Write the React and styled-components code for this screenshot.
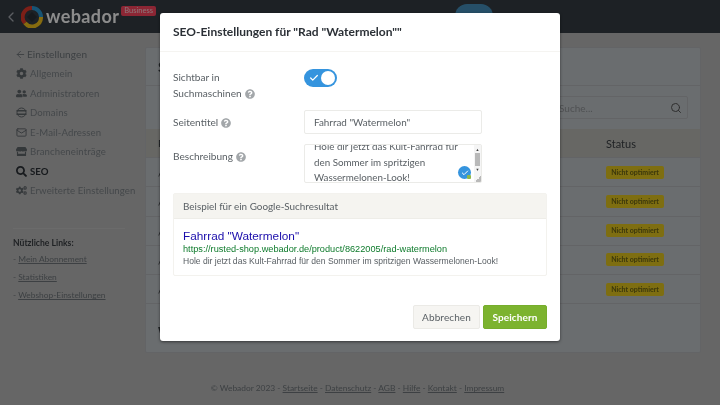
import React from "react";
import styled, { createGlobalStyle } from "styled-components";
import {
  FaCog,
  FaCogs,
  FaQuestionCircle,
  FaSearch,
  FaStore,
  FaUserFriends,
} from "react-icons/fa";
import { ArrowLeft, Check, ChevronLeft, Mail, Search } from "lucide-react";

const GlobalStyle = createGlobalStyle`
  html, body {
    margin: 0;
    padding: 0;
    width: 720px;
    height: 405px;
    overflow: hidden;
    background: #bababa;
    font-family: Lato, "Open Sans", sans-serif;
  }
  * { box-sizing: border-box; }
`;

const Page = styled.div`
  position: relative;
  width: 720px;
  height: 405px;
  display: flex;
  flex-direction: column;
  background: #bababa;
  filter: blur(0.35px);
`;

const TopBar = styled.header`
  height: 33px;
  background: #353c44;
  display: flex;
  align-items: center;
  padding-left: 3px;
  position: relative;
`;

const Back = styled(ChevronLeft)`
  color: #a8adb2;
  margin-right: 2px;
`;

const Brand = styled.span`
  font-size: 18px;
  font-weight: 700;
  letter-spacing: 0.4px;
  color: #fff;
  margin-left: 3px;
  margin-top: -1px;
`;

const PlanBadge = styled.span`
  align-self: flex-start;
  margin: 6px 0 0 2px;
  height: 10px;
  padding: 0 3px;
  background: #ff4560;
  border-radius: 2px;
  color: #ffd6da;
  font-size: 7.5px;
  line-height: 10px;
`;

const PublishButton = styled.span`
  position: absolute;
  left: 455px;
  top: 4px;
  width: 38px;
  height: 24px;
  border-radius: 12px;
  background: #4591bd;
`;

const Body = styled.div`
  display: flex;
  height: 372px;
`;

const Sidebar = styled.nav`
  width: 145px;
  padding: 14px 0 0 13px;
  flex-shrink: 0;
`;

const BackLink = styled.div`
  display: flex;
  align-items: center;
  gap: 1px;
  height: 14px;
  margin: 0 0 3px 2px;
  font-size: 10px;
  letter-spacing: 0.1px;
  color: #6f757a;
`;

const NavItem = styled.div`
  display: flex;
  align-items: center;
  height: 19.5px;
  font-size: 9.6px;
  letter-spacing: 0.1px;
  white-space: nowrap;
  color: ${(p) => (p.$active ? "#2b3036" : "#7d8388")};
  font-weight: ${(p) => (p.$active ? 700 : 400)};
  svg {
    width: 11px;
    height: 11px;
    flex-shrink: 0;
    margin: 0 3px 0 3px;
    color: ${(p) => (p.$active ? "#2b3036" : "#60666b")};
  }
`;

const Rule = styled.div`
  width: 112px;
  height: 1px;
  background: #c4c4c4;
  margin: 27px 0 9px;
`;

const LinksTitle = styled.div`
  font-size: 8.6px;
  line-height: 10px;
  font-weight: 700;
  color: #3a3e43;
  margin-bottom: 5px;
`;

const UsefulLink = styled.div`
  font-size: 8.4px;
  color: #6f757a;
  height: 18.4px;
  line-height: 12px;
  span {
    text-decoration: underline;
  }
`;

const Card = styled.main`
  width: 556px;
  height: 306px;
  margin-top: 14px;
  background: #c2c6cb;
  border: 1px solid #b4b7ba;
  border-radius: 2px;
  display: flex;
  flex-direction: column;
`;

const CardTitle = styled.div`
  height: 38px;
  padding: 10px 12px;
  font-size: 14px;
  font-weight: 700;
  color: #3a3e43;
  border-bottom: 1px solid #b4b7ba;
`;

const SearchRow = styled.div`
  height: 43px;
  display: flex;
  justify-content: flex-end;
  align-items: center;
  padding-right: 12px;
`;

const SearchBox = styled.div`
  width: 300px;
  height: 23px;
  border: 1px solid #b4b7ba;
  border-radius: 2px;
  display: flex;
  align-items: center;
  justify-content: space-between;
  padding: 0 5px 0 170px;
  font-size: 10px;
  color: #8f9396;
`;

const Row = styled.div`
  display: flex;
  justify-content: space-between;
  align-items: center;
  height: 29.2px;
  padding: 0 36px 0 12px;
  font-size: 10px;
  color: #3a3e43;
  border-bottom: 1px solid #b4b7ba;
  background: ${(p) => (p.$head ? "#bcbcb6" : "transparent")};
`;

const StatusHead = styled.span`
  width: 58px;
  font-size: 11px;
  margin-left: -1px;
`;

const StatusBadge = styled.span`
  width: 58px;
  height: 13px;
  border-radius: 2px;
  background: #e6c91f;
  color: #6b6415;
  font-size: 7px;
  line-height: 13px;
  font-weight: 700;
  text-align: center;
  white-space: nowrap;
`;

const SubTitle = styled.div`
  margin: 20px 0 0 12px;
  font-size: 13px;
  font-weight: 700;
  color: #3a3e43;
`;

const Footer = styled.footer`
  position: absolute;
  top: 383px;
  left: 0;
  width: 720px;
  padding-right: 5px;
  text-align: center;
  font-size: 8.4px;
  color: #6f757a;
  span {
    text-decoration: underline;
  }
`;

const Overlay = styled.div`
  position: absolute;
  inset: 0;
  background: rgba(0, 0, 0, 0.45);
`;

const Modal = styled.section`
  position: absolute;
  left: 160px;
  top: 13px;
  width: 400px;
  height: 328px;
  background: #fff;
  border-radius: 3px;
  box-shadow: 0 1px 3px rgba(0, 0, 0, 0.5);
  color: #5a6065;
`;

const ModalHead = styled.h2`
  margin: 0;
  height: 39px;
  padding: 0 13px;
  font-size: 12px;
  line-height: 38px;
  font-weight: 700;
  color: #2b3036;
  border-bottom: 1px solid #f5f4f1;
`;

const ModalBody = styled.div`
  padding: 17px 13px 0;
`;

const Field = styled.div`
  display: grid;
  grid-template-columns: 131px 178px;
  font-size: 10.1px;
  line-height: 16px;
  margin-bottom: ${(p) => p.$gap}px;
`;

const FieldLabel = styled.label`
  display: block;
  padding-top: ${(p) => p.$top || 0}px;
`;

const Help = styled(FaQuestionCircle)`
  color: #a3a7aa;
  width: 10px;
  height: 10px;
  margin-left: 3px;
  vertical-align: -2px;
`;

const Toggle = styled.span`
  width: 33px;
  height: 18px;
  border-radius: 9px;
  background: #3594de;
  display: flex;
  align-items: center;
  justify-content: space-between;
  padding: 0 2px 0 5px;
  color: #fff;
`;

const Knob = styled.span`
  width: 14px;
  height: 14px;
  border-radius: 50%;
  background: #fff;
`;

const TextInput = styled.div`
  height: 24px;
  padding: 0 9px;
  font-size: 9.9px;
  line-height: 23px;
  border: 1px solid #ebebe8;
  border-radius: 2px;
`;

const TextArea = styled.div`
  position: relative;
  height: 39px;
  overflow: hidden;
  border: 1px solid #ebebe8;
  border-radius: 2px;
  display: flex;
`;

const AreaText = styled.div`
  flex: 1;
  padding: 0 6px 0 9px;
  margin-top: -6px;
  font-size: 9.8px;
  line-height: 15.7px;
`;

const Scrollbar = styled.div`
  width: 7px;
  background: #f5f5f5;
  position: relative;
  display: flex;
  flex-direction: column;
  align-items: center;
  justify-content: space-between;
  padding: 3px 0 10px;
  font-size: 4px;
  line-height: 4px;
  color: #444;
  &::after {
    content: "";
    position: absolute;
    right: 0;
    bottom: 0;
    width: 6px;
    height: 6px;
    background: linear-gradient(135deg, transparent 50%, #b9b9b9 50%);
  }
`;

const Thumb = styled.span`
  position: absolute;
  top: 8px;
  left: 1px;
  width: 5px;
  height: 13px;
  background: #b9b9b9;
`;

const Checker = styled.span`
  position: absolute;
  right: 10px;
  bottom: 3px;
  width: 13px;
  height: 13px;
  border-radius: 50%;
  background: #3594de;
  color: #fff;
  display: flex;
  align-items: center;
  justify-content: center;
  &::after {
    content: "";
    position: absolute;
    right: 0;
    bottom: 0;
    width: 4px;
    height: 4px;
    background: #8fb84a;
    border-radius: 1px;
  }
`;

const Preview = styled.div`
  margin-top: 10px;
  height: 83px;
  border: 1px solid #f3f2ee;
  border-radius: 2px;
`;

const PreviewHead = styled.div`
  height: 25px;
  padding: 0 9px;
  font-size: 9.9px;
  line-height: 24px;
  background: #f5f4f0;
  border-bottom: 1px solid #eeede8;
`;

const PreviewBody = styled.div`
  padding: 10px 9px;
  font-family: "Liberation Sans", Arial, sans-serif;
`;

const ResultTitle = styled.div`
  font-size: 11.8px;
  line-height: 14px;
  color: #1a0dab;
`;

const ResultUrl = styled.div`
  font-size: 9.2px;
  line-height: 12px;
  color: #0d7a2b;
`;

const ResultText = styled.div`
  font-size: 8.55px;
  line-height: 13px;
  color: #5a6065;
`;

const Actions = styled.div`
  display: flex;
  justify-content: flex-end;
  gap: 3px;
  margin-top: 29px;
`;

const Button = styled.button`
  height: 24px;
  width: ${(p) => (p.$primary ? 64 : 67)}px;
  padding: 0;
  border-radius: 2px;
  border: 1px solid ${(p) => (p.$primary ? "#76ad2c" : "#ebeae6")};
  background: ${(p) => (p.$primary ? "#7cb32f" : "#f6f5f2")};
  color: ${(p) => (p.$primary ? "#fff" : "#5a6065")};
  font-family: inherit;
  font-size: 10px;
  letter-spacing: 0.1px;
  font-weight: ${(p) => (p.$primary ? 700 : 400)};
`;

const Logo = () => (
  <svg width="22" height="22" viewBox="0 0 22 22">
    <path d="M11 2 A9 9 0 0 0 4 17" fill="none" stroke="#e4392b" strokeWidth="4" />
    <path d="M11 2 A9 9 0 0 1 20 11" fill="none" stroke="#2a9ad6" strokeWidth="4" />
    <path d="M20 11 A9 9 0 0 1 4 17" fill="none" stroke="#f5c31c" strokeWidth="4" />
    <path d="M11 6 L16 11 L11 16 L6 11 Z" fill="#2b3036" />
  </svg>
);

const DomainIcon = () => (
  <svg width="11" height="11" viewBox="0 0 11 11" fill="none" stroke="currentColor">
    <circle cx="5.5" cy="5.5" r="4.5" />
    <path d="M0.5 3.8h10M0.5 7.2h10" strokeWidth="1.4" />
  </svg>
);

const rows = [0, 1, 2, 3, 4];

const App = () => (
  <Page>
    <GlobalStyle />
    <TopBar>
      <Back size={16} />
      <Logo />
      <Brand>webador</Brand>
      <PlanBadge>Business</PlanBadge>
      <PublishButton />
    </TopBar>
    <Body>
      <Sidebar>
        <BackLink>
          <ArrowLeft size={11} />
          Einstellungen
        </BackLink>
        <NavItem>
          <FaCog />
          Allgemein
        </NavItem>
        <NavItem>
          <FaUserFriends />
          Administratoren
        </NavItem>
        <NavItem>
          <DomainIcon />
          Domains
        </NavItem>
        <NavItem>
          <Mail size={11} />
          E-Mail-Adressen
        </NavItem>
        <NavItem>
          <FaStore />
          Brancheneinträge
        </NavItem>
        <NavItem $active>
          <FaSearch />
          SEO
        </NavItem>
        <NavItem>
          <FaCogs />
          Erweiterte Einstellungen
        </NavItem>
        <Rule />
        <LinksTitle>Nützliche Links:</LinksTitle>
        <UsefulLink>
          - <span>Mein Abonnement</span>
        </UsefulLink>
        <UsefulLink>
          - <span>Statistiken</span>
        </UsefulLink>
        <UsefulLink>
          - <span>Webshop-Einstellungen</span>
        </UsefulLink>
      </Sidebar>
      <Card>
        <CardTitle>SEO</CardTitle>
        <SearchRow>
          <SearchBox>
            Suche...
            <Search size={12} color="#555" />
          </SearchBox>
        </SearchRow>
        <Row $head>
          <span>Produkt</span>
          <StatusHead>Status</StatusHead>
        </Row>
        {rows.map((r) => (
          <Row key={r}>
            <span>/</span>
            <StatusBadge>Nicht optimiert</StatusBadge>
          </Row>
        ))}
        <SubTitle>Webshop</SubTitle>
      </Card>
    </Body>
    <Footer>
      © Webador 2023 - <span>Startseite</span> - <span>Datenschutz</span> -{" "}
      <span>AGB</span> - <span>Hilfe</span> - <span>Kontakt</span> -{" "}
      <span>Impressum</span>
    </Footer>
    <Overlay />
    <Modal>
      <ModalHead>SEO-Einstellungen für "Rad "Watermelon""</ModalHead>
      <ModalBody>
        <Field $gap={9}>
          <FieldLabel>
            Sichtbar in
            <br />
            Suchmaschinen
            <Help />
          </FieldLabel>
          <Toggle>
            <Check size={10} strokeWidth={3} />
            <Knob />
          </Toggle>
        </Field>
        <Field $gap={10}>
          <FieldLabel $top={4}>
            Seitentitel
            <Help />
          </FieldLabel>
          <TextInput>Fahrrad "Watermelon"</TextInput>
        </Field>
        <Field $gap={0}>
          <FieldLabel $top={4}>
            Beschreibung
            <Help />
          </FieldLabel>
          <TextArea>
            <AreaText>
              Hole dir jetzt das Kult-Fahrrad für den Sommer im spritzigen
              Wassermelonen-Look!
            </AreaText>
            <Scrollbar>
              <span>▲</span>
              <Thumb />
              <span>▼</span>
            </Scrollbar>
            <Checker>
              <Check size={8} strokeWidth={3} />
            </Checker>
          </TextArea>
        </Field>
        <Preview>
          <PreviewHead>Beispiel für ein Google-Suchresultat</PreviewHead>
          <PreviewBody>
            <ResultTitle>Fahrrad "Watermelon"</ResultTitle>
            <ResultUrl>
              https://rusted-shop.webador.de/product/8622005/rad-watermelon
            </ResultUrl>
            <ResultText>
              Hole dir jetzt das Kult-Fahrrad für den Sommer im spritzigen
              Wassermelonen-Look!
            </ResultText>
          </PreviewBody>
        </Preview>
        <Actions>
          <Button>Abbrechen</Button>
          <Button $primary>Speichern</Button>
        </Actions>
      </ModalBody>
    </Modal>
  </Page>
);

export default App;
